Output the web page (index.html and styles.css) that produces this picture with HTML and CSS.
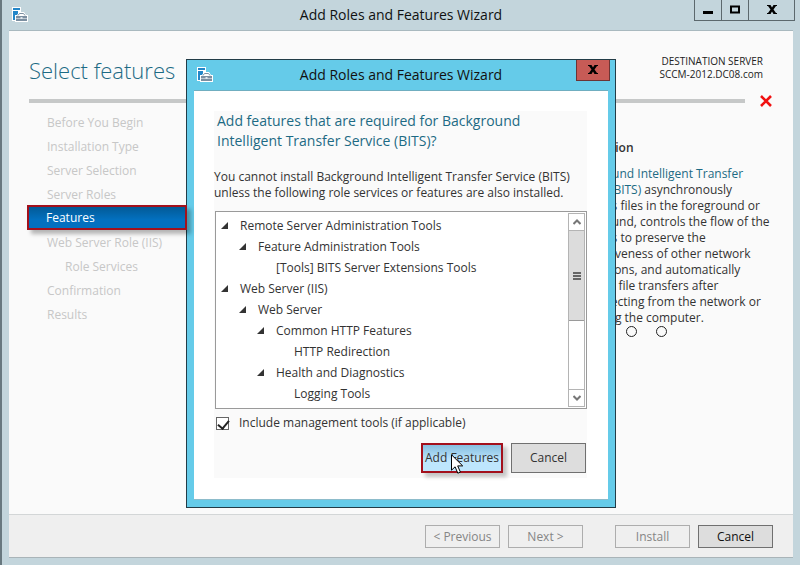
FILE: index.html
```html
<!DOCTYPE html>
<html lang="en">
<head>
<meta charset="utf-8">
<title>Add Roles and Features Wizard</title>
<link rel="stylesheet" href="styles.css">
</head>
<body>
<svg class="defs" aria-hidden="true">
  <symbol id="server" viewBox="0 0 17 17">
    <path d="M1 1h9v6H8v8H1z" fill="#fff"/>
    <path d="M2 2h7v2H2zM2 5h5v9H2z" fill="#2386c8"/>
    <path d="M4 9h2l2-3h5l2 3h2v7H4z" fill="#fff"/>
    <path d="M5 10h11v2H5zM5 12.500h11V15H5z" fill="#7c8fa1"/>
    <path d="M7 9.500 8.500 7.500h4L14 9.500" fill="none" stroke="#7c8fa1"/>
    <path d="M9.500 11h2v2h-2z" fill="#dfe6ec"/>
  </symbol>
  <symbol id="close" viewBox="0 0 10 9">
    <path d="M0 0h3.500L5 2.600 6.500 0H10v1H9L6.500 4.500 9 8h1v1H6.500L5 6.400 3.500 9H0V8h1l2.500-3.500L1 1H0z" fill="#000"/>
  </symbol>
</svg>
<main class="window">
  <header class="titlebar">
    <svg class="app-icon"><use href="#server"/></svg>
    <span class="title">Add Roles and Features Wizard</span>
    <div class="caption-buttons">
      <button type="button" aria-label="Minimize"><svg width="10" height="9" viewBox="0 0 10 9"><path d="M0 6h10v3H0z"/></svg></button>
      <button type="button" aria-label="Maximize"><svg width="10" height="9" viewBox="0 0 10 9"><path d="M1 1.500h8v6H1z" fill="none" stroke="#000" stroke-width="2"/></svg></button>
      <button type="button" class="wide" aria-label="Close"><svg width="10" height="9"><use href="#close"/></svg></button>
    </div>
  </header>
  <div class="client">
    <div class="heading">
      <h1>Select features</h1>
      <p class="destination">DESTINATION SERVER<br>SCCM-2012.DC08.com</p>
    </div>
    <div class="rule-row">
      <span class="rule"></span>
      <svg width="12" height="12" viewBox="0 0 12 12"><path d="M1 1 11 11M11 1 1 11" stroke="#f01010" stroke-width="2.600"/></svg>
    </div>
    <div class="body">
      <nav>
        <a>Before You Begin</a>
        <a>Installation Type</a>
        <a>Server Selection</a>
        <a>Server Roles</a>
        <a class="current" href="#features">Features</a>
        <a>Web Server Role (IIS)</a>
        <a class="sub">Role Services</a>
        <a>Confirmation</a>
        <a>Results</a>
      </nav>
      <section class="description">
        <h2>Description</h2>
        <p><a href="#bits">Background Intelligent Transfer<br>Service (BITS)</a> asynchronously<br>transfers files in the foreground or<br>background, controls the flow of the<br>transfers to preserve the<br>responsiveness of other network<br>applications, and automatically<br>resumes file transfers after<br>disconnecting from the network or<br>restarting the computer.</p>
        <div class="options">
          <input type="radio" name="option" aria-label="First option">
          <input type="radio" name="option" aria-label="Second option">
        </div>
      </section>
    </div>
    <footer>
      <button type="button" disabled>&lt; Previous</button>
      <button type="button" disabled>Next &gt;</button>
      <button type="button" class="apart" disabled>Install</button>
      <button type="button">Cancel</button>
    </footer>
  </div>
</main>

<div class="overlay">
  <div class="dialog" role="dialog" aria-labelledby="dialog-title">
    <header class="titlebar">
      <svg class="app-icon"><use href="#server"/></svg>
      <span class="title" id="dialog-title">Add Roles and Features Wizard</span>
      <button type="button" class="dialog-close" aria-label="Close"><svg width="10" height="9"><use href="#close"/></svg></button>
    </header>
    <div class="dialog-client">
      <div class="panel">
        <h2>Add features that are required for Background Intelligent Transfer Service (BITS)?</h2>
        <p>You cannot install Background Intelligent Transfer Service (BITS)<br>unless the following role services or features are also installed.</p>
        <div class="tree-box">
          <ul class="tree">
            <li><span class="open">Remote Server Administration Tools</span>
              <ul>
                <li><span class="open">Feature Administration Tools</span>
                  <ul><li><span>[Tools] BITS Server Extensions Tools</span></li></ul>
                </li>
              </ul>
            </li>
            <li><span class="open">Web Server (IIS)</span>
              <ul>
                <li><span class="open">Web Server</span>
                  <ul>
                    <li><span class="open">Common HTTP Features</span>
                      <ul><li><span>HTTP Redirection</span></li></ul>
                    </li>
                    <li><span class="open">Health and Diagnostics</span>
                      <ul><li><span>Logging Tools</span></li></ul>
                    </li>
                  </ul>
                </li>
              </ul>
            </li>
          </ul>
          <div class="scrollbar">
            <button type="button" aria-label="Scroll up"><svg width="8" height="6" viewBox="0 0 8 6"><path d="M.5 5 4 1.500 7.500 5" fill="none" stroke="#777" stroke-width="2"/></svg></button>
            <div class="track"><div class="thumb"><i></i><i></i><i></i></div></div>
            <button type="button" aria-label="Scroll down"><svg width="8" height="6" viewBox="0 0 8 6"><path d="M.5 1 4 4.500 7.500 1" fill="none" stroke="#777" stroke-width="2"/></svg></button>
          </div>
        </div>
        <label class="include"><input type="checkbox" checked>Include management tools (if applicable)</label>
        <div class="actions">
          <button type="button" class="add">Add Features
            <svg class="pointer" width="12" height="20" viewBox="0 0 12 20"><path d="M.5.8v15.400l3.600-3.400 2.700 6.400 2.600-1.100-2.700-6.200h5z" fill="#fff" stroke="#000"/></svg>
          </button>
          <button type="button">Cancel</button>
        </div>
      </div>
    </div>
  </div>
</div>
</body>
</html>
```

FILE: styles.css
```css
* { box-sizing: border-box; }

body {
  margin: 0;
  background: #c3d5dc;
  color: #333;
  font: 12px/16px "Open Sans", "Noto Sans", sans-serif;
}

h1, h2, p, ul { margin: 0; padding: 0; font-weight: 400; }
ul { list-style: none; }
button { font: inherit; color: inherit; padding: 0; }
a { color: inherit; text-decoration: none; }
.defs { display: none; }

/* Main window */
.window {
  display: flex;
  flex-direction: column;
  min-height: 100vh;
  padding: 0 7px 7px;
  border-left: 2px solid #68787f;
}

.titlebar {
  display: flex;
  align-items: flex-start;
  position: relative;
  height: 30px;
}
.title {
  flex: 1;
  line-height: 30px;
  font-size: 14px;
  text-align: center;
  color: #111;
}
.app-icon {
  position: absolute;
  left: 2px;
  top: 6px;
  width: 17px;
  height: 17px;
}
.caption-buttons {
  position: absolute;
  right: -2px;
  top: -1px;
  display: flex;
}
.caption-buttons button {
  width: 28px;
  height: 22px;
  margin-left: -1px;
  border: 1px solid #5c686d;
  background: transparent;
}
.caption-buttons .wide { width: 47px; }

.client {
  flex: 1;
  display: flex;
  flex-direction: column;
  background: #fafafa;
  border-top: 1px solid #a9b9bf;
  border-bottom: 1px solid #a9b4b8;
}

.heading {
  display: flex;
  justify-content: space-between;
  padding: 22px 30px 0 20px;
  height: 68px;
}
h1 {
  font-size: 22px;
  line-height: 34px;
  font-weight: 300;
  color: #1d6a84;
}
.destination {
  font-size: 10px;
  line-height: 13px;
  text-align: right;
  padding-top: 2px;
  color: #222;
}

.rule-row {
  display: flex;
  align-items: center;
  gap: 15px;
  padding: 0 21px 0 20px;
  height: 4px;
}
.rule { flex: 1; height: 4px; background: #c6c8c8; }
.rule-row svg { flex: none; }

.body {
  flex: 1;
  display: flex;
  justify-content: space-between;
}
nav { width: 178px; padding: 8px 0 0 18px; }
nav a {
  display: block;
  height: 24px;
  padding-left: 20px;
  line-height: 24px;
  color: #c7c7c7;
}
nav .sub { padding-left: 38px; }
nav .current {
  position: relative;
  z-index: 1;
  height: 25px;
  margin: -2px 0 1px;
  padding-left: 17px;
  border: 2px solid #a3101c;
  background: linear-gradient(#035a96, #0370bf 60%);
  box-shadow: 4px 4px 4px rgba(0, 0, 0, .28);
  line-height: 22px;
  color: #fff;
}

.description { width: 226px; padding-top: 37px; }
.description h2 {
  font-size: 12px;
  font-weight: 600;
  margin-bottom: 10px;
}
.description a { color: #1d6a84; }
.options { display: flex; gap: 19px; padding: 0 0 0 59px; }
.options input {
  appearance: none;
  width: 11px;
  height: 11px;
  margin: 0;
  border: 1px solid #222;
  border-radius: 50%;
}

footer {
  display: flex;
  justify-content: flex-end;
  gap: 8px;
  padding: 10px 20px 9px;
  border-top: 1px solid #d3d6d7;
  background: #efefef;
}
footer button, .actions button {
  width: 75px;
  height: 23px;
  border: 1px solid #707070;
  background: #ddd;
}
footer button { color: #111; }
footer button:disabled {
  border-color: #adadad;
  background: #efefef;
  color: #858585;
}
footer .apart { margin-left: 24px; }

/* Confirmation dialog */
.overlay {
  position: absolute;
  inset: 59px 0 auto 2px;
  display: flex;
  justify-content: center;
}
.dialog {
  width: 430px;
  padding: 0 7px 7px;
  border: 1px solid #223c47;
  background: #65cbe9;
}
.dialog-close {
  position: absolute;
  right: -2px;
  top: 0;
  width: 34px;
  height: 21px;
  border: 1px solid #6c3434;
  border-top: 0;
  background: #c75b56;
}
.dialog-client {
  padding: 20px 21px 21px 20px;
  border-top: 1px solid #70aec0;
  border-bottom: 1px solid #8dbccb;
  background: #fff;
}
.panel { background: #fafafa; }
.panel h2 {
  padding-left: 3px;
  font-size: 14px;
  line-height: 20px;
  color: #1d6a84;
}
.panel p { padding: 18px 0 10px; }

.tree-box {
  display: flex;
  justify-content: space-between;
  margin-left: 1px;
  padding: 1px;
  border: 1px solid #9a9a9a;
  background: #fff;
}
.tree { padding: 2px 0 3px 5px; }
.tree ul { padding-left: 18px; }
.tree span {
  display: block;
  position: relative;
  padding-left: 18px;
  line-height: 21px;
}
.tree .open::before {
  content: "";
  position: absolute;
  left: -1px;
  top: 7px;
  width: 7px;
  height: 7px;
  background: #333;
  clip-path: polygon(100% 0, 100% 100%, 0 100%);
}

.scrollbar {
  display: flex;
  flex-direction: column;
  width: 17px;
  border: 1px solid #b4b4b4;
}
.scrollbar button {
  display: grid;
  place-items: center;
  height: 16px;
  border: 0;
  background: #fff;
}
.track {
  flex: 1;
  border: solid #b4b4b4;
  border-width: 1px 0;
}
.thumb {
  display: flex;
  flex-direction: column;
  align-items: center;
  justify-content: center;
  gap: 1px;
  height: 57%;
  background: #dcdcdc;
  border-bottom: 1px solid #9a9a9a;
}
.thumb i { width: 8px; height: 2px; background: #666; }

.include {
  display: flex;
  align-items: center;
  gap: 10px;
  height: 28px;
  padding-left: 2px;
}
.include input {
  appearance: none;
  width: 13px;
  height: 13px;
  margin: 0;
  border: 1px solid #666;
  background: #fff;
}
.include input::before {
  content: "";
  display: block;
  width: 5px;
  height: 9px;
  margin: 0 0 0 3px;
  border: solid #222;
  border-width: 0 2px 2px 0;
  transform: rotate(40deg);
}

.actions {
  display: flex;
  justify-content: flex-end;
  gap: 8px;
  padding: 6px 1px 5px 0;
}
.actions button { height: 30px; }
.actions .add {
  position: relative;
  width: 82px;
  border: 2px solid #a3101c;
  background: linear-gradient(#86bfe0, #bee6fd 60%);
  box-shadow: 4px 4px 4px rgba(0, 0, 0, .22);
  white-space: nowrap;
}
.pointer {
  position: absolute;
  left: 28px;
  top: 9px;
}
```
